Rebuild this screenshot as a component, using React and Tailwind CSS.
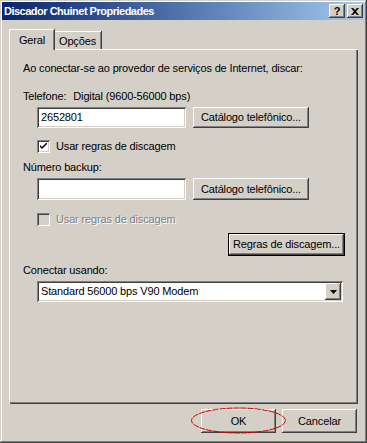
import React from 'react';

const raised =
  'bg-[#d4d0c8] shadow-[inset_-1px_-1px_#404040,inset_1px_1px_#ffffff,inset_-2px_-2px_#808080,inset_2px_2px_#d4d0c8]';
const sunken =
  'shadow-[inset_1px_1px_#808080,inset_-1px_-1px_#ffffff,inset_2px_2px_#404040,inset_-2px_-2px_#d4d0c8]';

function Button({ children, className = '', isDefault = false }) {
  if (isDefault) {
    return (
      <div className={`border border-black ${className}`}>
        <div className={`${raised} flex h-full w-full items-center justify-center`}>{children}</div>
      </div>
    );
  }
  return (
    <div className={`${raised} flex items-center justify-center ${className}`}>{children}</div>
  );
}

function Checkbox({ checked, disabled, label }) {
  return (
    <div className="flex items-center">
      <div
        className={`${sunken} relative h-[13px] w-[13px] ${disabled ? 'bg-[#d4d0c8]' : 'bg-white'}`}
      >
        {checked && (
          <svg className="absolute left-[3px] top-[3px]" width="7" height="7" viewBox="0 0 7 7">
            <path d="M0 2 L0 4 L2 6 L7 1 L7 -1 L2 4 Z" fill="#000" />
          </svg>
        )}
      </div>
      <span
        className={`ml-[6px] ${
          disabled ? 'text-[#808080] [text-shadow:1px_1px_#ffffff]' : 'text-black'
        }`}
      >
        {label}
      </span>
    </div>
  );
}

export default function App() {
  return (
    <div
      className="relative flex h-[443px] w-[367px] flex-col bg-[#d4d0c8] p-[2px] text-[11px] leading-[13px] tracking-[-0.15px] text-black shadow-[inset_-1px_-1px_#404040,inset_1px_1px_#d4d0c8,inset_-2px_-2px_#808080,inset_2px_2px_#ffffff]"
      style={{ fontFamily: '"Liberation Sans", Arial, sans-serif' }}
    >
      {/* title bar */}
      <div className="flex h-[18px] items-center justify-between bg-gradient-to-r from-[#0a246a] to-[#a6caf0] pl-[2px] pr-[2px]">
        <span className="text-[11px] font-bold tracking-[-0.5px] text-white">Discador Chuinet Propriedades</span>
        <div className="flex gap-[2px]">
          <div className={`${raised} flex h-[14px] w-[16px] items-center justify-center text-[11px] font-bold`}>
            ?
          </div>
          <div className={`${raised} flex h-[14px] w-[16px] items-center justify-center`}>
            <svg width="8" height="7" viewBox="0 0 8 7">
              <path d="M0 0 L2 0 L4 2 L6 0 L8 0 L5 3.5 L8 7 L6 7 L4 5 L2 7 L0 7 L3 3.5 Z" fill="#000" />
            </svg>
          </div>
        </div>
      </div>

      {/* tabs */}
      <div className="ml-[7px] mt-[9px] flex items-end">
        <div className="relative z-10 -mb-px flex h-[21px] w-[45px] items-start justify-center border-l border-t border-white bg-[#d4d0c8] pt-[4px] [box-shadow:1px_0_#404040,inset_-1px_0_#808080]">
          Geral
        </div>
        <div className="flex h-[18px] w-[47px] items-start justify-center border-t border-white pt-[3px] [box-shadow:1px_0_#404040,inset_-1px_0_#808080]">
          Opções
        </div>
      </div>

      {/* panel */}
      <div className="ml-[7px] flex h-[355px] w-[349px] flex-col pl-[14px] pt-[13px] shadow-[inset_1px_1px_#ffffff,inset_-1px_-1px_#404040,inset_-2px_-2px_#808080]">
        <div>Ao conectar-se ao provedor de serviços de Internet, discar:</div>

        <div className="mt-[15px] flex">
          <span>Telefone:</span>
          <span className="ml-[7px]">Digital (9600-56000 bps)</span>
        </div>

        <div className="ml-[14px] mt-[4px] flex gap-[7px]">
          <div className={`${sunken} flex h-[21px] w-[149px] items-center bg-white pl-[4px]`}>2652801</div>
          <Button className="h-[21px] w-[116px]">Catálogo telefônico...</Button>
        </div>

        <div className="ml-[14px] mt-[12px]">
          <Checkbox checked label="Usar regras de discagem" />
        </div>

        <div className="mt-[8px]">Número backup:</div>

        <div className="ml-[14px] mt-[4px] flex gap-[7px]">
          <div className={`${sunken} h-[22px] w-[149px] bg-white`} />
          <Button className="h-[22px] w-[116px]">Catálogo telefônico...</Button>
        </div>

        <div className="ml-[14px] mt-[13px]">
          <Checkbox disabled label="Usar regras de discagem" />
        </div>

        <div className="mt-[7px] flex justify-end pr-[13px]">
          <Button isDefault className="h-[23px] w-[117px]">
            Regras de discagem...
          </Button>
        </div>

        <div className="mt-[8px]">Conectar usando:</div>

        <div
          className={`${sunken} ml-[14px] mt-[4px] flex h-[21px] w-[306px] items-center justify-between bg-white pl-[4px] pr-[2px]`}
        >
          <span>Standard 56000 bps V90 Modem</span>
          <div className={`${raised} flex h-[17px] w-[16px] items-center justify-center`}>
            <svg width="7" height="4" viewBox="0 0 7 4">
              <path d="M0 0 L7 0 L3.5 4 Z" fill="#000" />
            </svg>
          </div>
        </div>
      </div>

      {/* bottom buttons */}
      <div className="mt-[5px] flex justify-end gap-[6px] pr-[8px]">
        <div className="relative">
          <Button className="h-[24px] w-[75px]">OK</Button>
          <svg
            className="pointer-events-none absolute left-[-11px] top-[-2px]"
            width="97"
            height="28"
            viewBox="0 0 97 28"
          >
            <ellipse cx="48.5" cy="13.5" rx="47" ry="12.5" fill="none" stroke="#cc0000" strokeWidth="1" strokeDasharray="6 1" />
          </svg>
        </div>
        <Button className="h-[24px] w-[75px]">Cancelar</Button>
      </div>
    </div>
  );
}
